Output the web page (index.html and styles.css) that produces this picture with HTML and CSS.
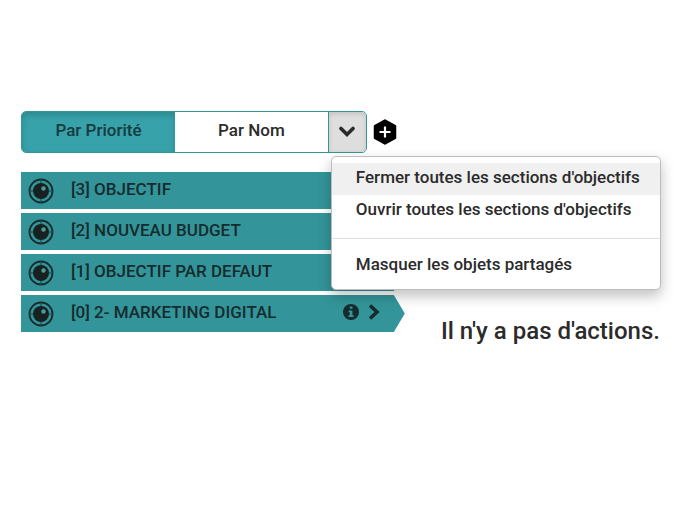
FILE: index.html
```
<!DOCTYPE html>
<html lang="fr">
<head>
  <meta charset="UTF-8">
  <meta name="viewport" content="width=device-width, initial-scale=1.0">
  <title>Objectifs</title>
  <link rel="stylesheet" href="styles.css">
</head>
<body>
  <!-- Shared icons -->
  <svg class="sprite" aria-hidden="true">
    <symbol id="icon-target" viewBox="0 0 26 26">
      <circle cx="13" cy="13" r="11.5" fill="none" stroke="#16292c" stroke-width="1.8"/>
      <path d="M13 1v4M13 21v4M1 13h4M21 13h4" stroke="#1d4447" stroke-width="1"/>
      <circle cx="13" cy="13" r="8" fill="#17211f"/>
      <circle cx="15.5" cy="10.5" r="2.2" fill="#4f9a9b"/>
    </symbol>
    <symbol id="icon-info" viewBox="0 0 16 16">
      <circle cx="8" cy="8" r="8" fill="#162b2e"/>
      <path d="M6.8 2.6h2.6v2.2H6.8zM5.6 6.4h3.8v4.8h1.2v1.8H5.6v-1.8h1.2V8.2H5.6z" fill="#339599"/>
    </symbol>
    <symbol id="icon-next" viewBox="0 0 12 16">
      <path d="M2 1.5L9 8l-7 6.5" fill="none" stroke="#162b2e" stroke-width="3.6"/>
    </symbol>
  </svg>

  <main class="page">
    <section class="objectives">
      <div class="toolbar">
        <div class="btn-group">
          <button type="button" class="btn active">Par Priorité</button>
          <button type="button" class="btn">Par Nom</button>
          <button type="button" class="btn toggle" aria-label="Options" aria-expanded="true">
            <svg width="16" height="12" viewBox="0 0 16 12">
              <path d="M2 2.5l6 6 6-6" fill="none" stroke="#2a2a2a" stroke-width="3.6" stroke-linecap="round"/>
            </svg>
          </button>
          <ul class="menu">
            <li><button type="button" class="menu-item selected">Fermer toutes les sections d'objectifs</button></li>
            <li><button type="button" class="menu-item">Ouvrir toutes les sections d'objectifs</button></li>
            <li class="divider"></li>
            <li><button type="button" class="menu-item">Masquer les objets partagés</button></li>
          </ul>
        </div>
        <button type="button" class="add" aria-label="Ajouter">
          <svg width="24" height="26" viewBox="0 0 24 26">
            <path d="M12 1.5L22 7v12l-10 5.5L2 19V7z" fill="#000" stroke="#000" stroke-width="2.5" stroke-linejoin="round"/>
            <path d="M12 7.5v11M6.5 13h11" stroke="#fff" stroke-width="2.2"/>
          </svg>
        </button>
      </div>

      <ul class="objective-list">
        <li class="objective">
          <svg class="target"><use href="#icon-target"/></svg>
          <span class="name">[3] OBJECTIF</span>
        </li>
        <li class="objective">
          <svg class="target"><use href="#icon-target"/></svg>
          <span class="name">[2] NOUVEAU BUDGET</span>
        </li>
        <li class="objective">
          <svg class="target"><use href="#icon-target"/></svg>
          <span class="name">[1] OBJECTIF PAR DEFAUT</span>
        </li>
        <li class="objective">
          <svg class="target"><use href="#icon-target"/></svg>
          <span class="name">[0] 2- MARKETING DIGITAL</span>
          <button type="button" class="icon-btn" aria-label="Informations">
            <svg width="16" height="16"><use href="#icon-info"/></svg>
          </button>
          <button type="button" class="icon-btn" aria-label="Ouvrir">
            <svg width="12" height="16"><use href="#icon-next"/></svg>
          </button>
        </li>
      </ul>
    </section>

    <section class="actions">
      <p>Il n'y a pas d'actions.</p>
    </section>
  </main>
</body>
</html>
```
FILE: styles.css
```
* {
  margin: 0;
  padding: 0;
  box-sizing: border-box;
}

body {
  font-family: Roboto, 'Liberation Sans', sans-serif;
  font-size: 17px;
  font-weight: 500;
  background: #fff;
  color: #2b2b2b;
}

button {
  font: inherit;
  color: inherit;
  background: none;
  border: none;
  cursor: pointer;
}

ul {
  list-style: none;
}

svg {
  display: block;
}

.sprite {
  position: absolute;
  width: 0;
  height: 0;
}

.page {
  display: grid;
  grid-template-columns: 7fr 5fr;
  padding: 111px 21px 20px;
}

/* Toolbar */
.toolbar {
  display: flex;
  align-items: center;
  gap: 6px;
  padding-right: 8px;
  margin-bottom: 19px;
}

.btn-group {
  position: relative;
  display: flex;
  flex: 1;
  height: 42px;
  border: 1px solid #339599;
  border-radius: 5px;
}

.btn {
  flex: 1;
  padding-bottom: 4px;
}

.btn.active {
  background: #38a2aa;
  color: #163a3e;
  border-radius: 4px 0 0 4px;
  box-shadow: inset 0 3px 6px rgba(0, 60, 60, 0.25);
}

.btn.toggle {
  display: flex;
  flex: 0 0 38px;
  align-items: center;
  justify-content: center;
  padding: 0;
  background: #dedede;
  border-left: 1px solid #339599;
  border-radius: 0 4px 4px 0;
  box-shadow: inset 0 2px 5px rgba(0, 0, 0, 0.12);
}

/* Drop-down menu */
.menu {
  position: absolute;
  top: 100%;
  left: 100%;
  z-index: 10;
  width: 330px;
  margin: 4px 0 0 -35px;
  padding: 6px 0 7px;
  background: #fff;
  border: 1px solid #bdbdbd;
  border-radius: 5px;
  box-shadow: 0 6px 14px rgba(0, 0, 0, 0.25);
}

.menu-item {
  display: block;
  width: 100%;
  padding: 0 24px 4px;
  line-height: 28px;
  text-align: left;
  white-space: nowrap;
}

.menu-item.selected {
  background: #f0f0f0;
}

.divider {
  height: 1px;
  margin: 11px 0;
  background: #dedede;
}

/* Objectives */
.objective-list {
  display: grid;
  gap: 4px;
}

.objective {
  display: flex;
  align-items: center;
  height: 37px;
  padding: 0 25px 0 7px;
  background: #339599;
  color: #162b2e;
  clip-path: polygon(0 0, calc(100% - 11px) 0, 100% 50%, calc(100% - 11px) 100%, 0 100%);
}

.target {
  width: 26px;
  height: 26px;
  margin-right: 17px;
}

.name {
  flex: 1;
  padding-bottom: 3px;
}

.icon-btn {
  margin-left: 9px;
  padding-bottom: 4px;
}

/* Actions */
.actions {
  padding: 206px 19px 0 0;
  text-align: right;
  font-size: 24px;
  line-height: 28px;
  white-space: nowrap;
}
```
